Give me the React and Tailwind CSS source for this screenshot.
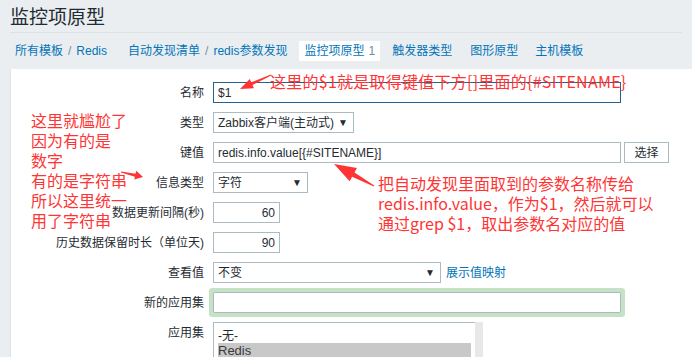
import React from 'react';

const UI_FONT = { fontFamily: '"Liberation Sans", "Noto Sans CJK SC", sans-serif' };
const NOTE_FONT = { fontFamily: '"Noto Sans CJK SC", "Liberation Sans", sans-serif' };

// tapered arrow: tail (x1,y1) -> tip (x2,y2)
function Arrow({ x1, y1, x2, y2, tail = 1, shaft = 3, head = 12, headW = 10 }) {
  const dx = x2 - x1;
  const dy = y2 - y1;
  const len = Math.hypot(dx, dy);
  const ux = dx / len;
  const uy = dy / len;
  const nx = -uy;
  const ny = ux;
  const bx = x2 - ux * head;
  const by = y2 - uy * head;
  const p = (x, y) => `${x.toFixed(1)},${y.toFixed(1)}`;
  const pts = [
    p(x1 + (nx * tail) / 2, y1 + (ny * tail) / 2),
    p(bx + (nx * shaft) / 2, by + (ny * shaft) / 2),
    p(bx + (nx * headW) / 2, by + (ny * headW) / 2),
    p(x2, y2),
    p(bx - (nx * headW) / 2, by - (ny * headW) / 2),
    p(bx - (nx * shaft) / 2, by - (ny * shaft) / 2),
    p(x1 - (nx * tail) / 2, y1 - (ny * tail) / 2),
  ].join(' ');
  return <polygon points={pts} fill="#ff3434" />;
}

function Row({ label, children, top = false }) {
  return (
    <div className={`flex gap-[9px] ${top ? 'items-start' : 'items-center'}`}>
      <div className={`w-[193px] shrink-0 text-right text-[12px] text-[#1f2c33] ${top ? 'pt-[2px]' : ''}`}>
        {label}
      </div>
      {children}
    </div>
  );
}

function Select({ value, width }) {
  return (
    <div
      className={`h-[21px] ${width} border border-[#acbbc2] bg-white flex items-center justify-between pl-[4px] pr-[5px] text-[12px] text-[#1f2c33]`}
    >
      <span>{value}</span>
      <span className="text-[10px] text-[#1f2c33]">▼</span>
    </div>
  );
}

export default function App() {
  return (
    <div className="relative w-[692px] h-[357px] overflow-hidden bg-[#ebeef0]" style={UI_FONT}>
      {/* header */}
      <div className="mx-[10px] h-[33px] border-b border-[#dde2e5] flex items-center">
        <h1 className="text-[19px] leading-none text-[#1f2c33] pt-[2px]">监控项原型</h1>
      </div>

      {/* nav */}
      <div className="h-[36px] flex items-center text-[12px] text-[#0275b8]">
        <div className="flex items-center pl-[15px] gap-[5px]">
          <span>所有模板</span>
          <span className="text-[#768d99]">/</span>
          <span>Redis</span>
        </div>
        <div className="flex items-center ml-[21px] gap-[5px]">
          <span>自动发现清单</span>
          <span className="text-[#768d99]">/</span>
          <span>redis参数发现</span>
        </div>
        <div className="ml-[12px] h-[20px] px-[5px] bg-white flex items-center gap-[4px]">
          <span>监控项原型</span>
          <span className="text-[#768d99]">1</span>
        </div>
        <span className="ml-[12px]">触发器类型</span>
        <span className="ml-[18px]">图形原型</span>
        <span className="ml-[17px]">主机模板</span>
      </div>

      {/* panel */}
      <div className="ml-[10px] h-[288px] bg-white border-l border-[#dfe4e7] pt-[13px]">
        <div className="flex flex-col gap-[9px]">
          <Row label="名称">
            <div className="h-[21px] w-[408px] border border-[#23618f] flex items-center px-[4px] text-[12px] text-[#1f2c33]">
              $1
            </div>
          </Row>
          <Row label="类型">
            <Select value="Zabbix客户端(主动式)" width="w-[141px]" />
          </Row>
          <Row label="键值">
            <div className="flex gap-[3px]">
              <div className="h-[21px] w-[408px] border border-[#acbbc2] flex items-center px-[4px] text-[12px] text-[#1f2c33]">
                redis.info.value[{'{#SITENAME}'}]
              </div>
              <div className="h-[21px] w-[45px] border border-[#acbbc2] bg-white flex items-center justify-center text-[12px] text-[#1f2c33]">
                选择
              </div>
            </div>
          </Row>
          <Row label="信息类型">
            <Select value="字符" width="w-[95px]" />
          </Row>
          <Row label="数据更新间隔(秒)">
            <div className="h-[21px] w-[67px] border border-[#acbbc2] flex items-center justify-end px-[4px] text-[12px] text-[#1f2c33]">
              60
            </div>
          </Row>
          <Row label="历史数据保留时长（单位天)">
            <div className="h-[21px] w-[67px] border border-[#acbbc2] flex items-center justify-end px-[4px] text-[12px] text-[#1f2c33]">
              90
            </div>
          </Row>
          <Row label="查看值">
            <div className="flex items-center gap-[5px]">
              <Select value="不变" width="w-[228px]" />
              <span className="text-[12px] text-[#0275b8]">展示值映射</span>
            </div>
          </Row>
          <Row label="新的应用集">
            <div className="h-[21px] w-[408px] border border-[#acbbc2] rounded-[1px] ring-4 ring-[#c6e2c6]" />
          </Row>
          <Row label="应用集" top>
            <div className="flex">
              <div className="w-[262px] h-[40px] border-t border-l border-[#acbbc2] pt-[6px] pl-[4px] pr-[4px] text-[12px] text-[#1f2c33]">
                <div className="h-[14px] leading-[14px]">-无-</div>
                <div className="h-[16px] leading-[16px] bg-[#c8c8c8] text-[#3a3a3a] text-[13px]">Redis</div>
              </div>
              <div className="w-[8px] h-[40px] bg-[#e8e8e8]" />
            </div>
          </Row>
        </div>
      </div>

      {/* annotations */}
      <div
        className="absolute left-[270px] top-[71px] text-[16px] leading-[20px] tracking-[0.25px] text-[#ff3434] whitespace-nowrap"
        style={NOTE_FONT}
      >
        这里的$1就是取得键值下方[]里面的{'{#SITENAME}'}
      </div>
      <div
        className="absolute left-[31px] top-[110px] text-[16px] leading-[20px] text-[#ff3434] whitespace-nowrap"
        style={NOTE_FONT}
      >
        <div>这里就尴尬了</div>
        <div>因为有的是</div>
        <div>数字</div>
        <div>有的是字符串</div>
        <div>所以这里统一</div>
        <div>用了字符串</div>
      </div>
      <div
        className="absolute left-[378px] top-[173px] text-[16px] leading-[20px] text-[#ff3434] whitespace-nowrap"
        style={NOTE_FONT}
      >
        <div>把自动发现里面取到的参数名称传给</div>
        <div>redis.info.value，作为$1，然后就可以</div>
        <div>通过grep $1，取出参数名对应的值</div>
      </div>

      <svg className="absolute left-0 top-0 pointer-events-none" width="692" height="357">
        <Arrow x1={271} y1={75} x2={240} y2={89} tail={1} shaft={3} head={13} headW={10} />
        <Arrow x1={121} y1={172} x2={143} y2={177} tail={1} shaft={3} head={8} headW={9} />
        <Arrow x1={374} y1={186} x2={334} y2={164} tail={1} shaft={5} head={22} headW={15} />
      </svg>
    </div>
  );
}
